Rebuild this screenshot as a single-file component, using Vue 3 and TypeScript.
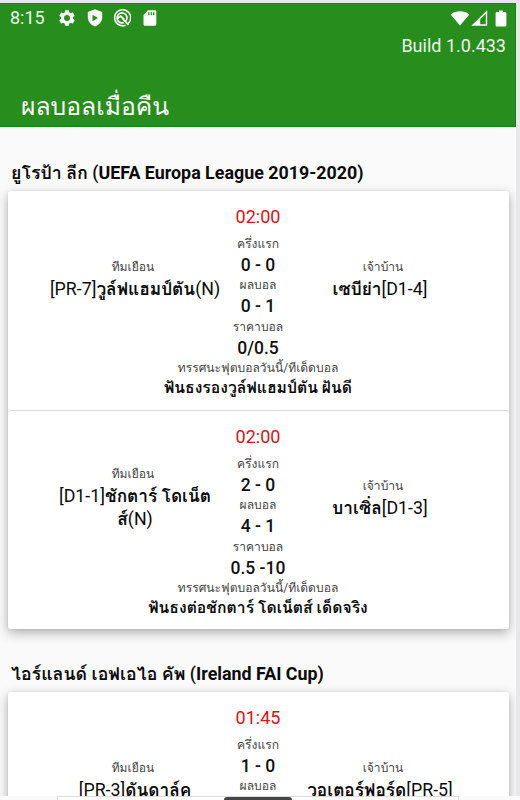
<script setup lang="ts">
interface Match {
  time: string
  away: string[]
  home: string
  half: string
  full: string
  odds: string
  tip: string
}
interface League {
  name: string
  latin: string
  matches: Match[]
}
interface Run {
  text: string
  thai: boolean
}

const leagues: League[] = [
  {
    name: 'ยูโรป้า ลีก',
    latin: 'UEFA Europa League 2019-2020)',
    matches: [
      { time: '02:00', away: ['[PR-7]วูล์ฟแฮมป์ตัน(N)'], home: 'เซบีย่า[D1-4]', half: '0 - 0', full: '0 - 1', odds: '0/0.5', tip: 'ฟันธงรองวูล์ฟแฮมป์ตัน ฝันดี' },
      { time: '02:00', away: ['[D1-1]ชักตาร์ โดเน็ต', 'ส์(N)'], home: 'บาเซิ่ล[D1-3]', half: '2 - 0', full: '4 - 1', odds: '0.5 -10', tip: 'ฟันธงต่อชักตาร์ โดเน็ตส์ เด็ดจริง' },
    ],
  },
  {
    name: 'ไอร์แลนด์ เอฟเอไอ คัพ',
    latin: 'Ireland FAI Cup)',
    matches: [
      { time: '01:45', away: ['[PR-3]ดันดาล์ค'], home: 'วอเตอร์ฟอร์ด[PR-5]', half: '1 - 0', full: '', odds: '', tip: '' },
    ],
  },
]

// Thai script is set heavier than the Latin rank tags around it.
function runs(text: string): Run[] {
  const parts = text.match(/[\u0e00-\u0e7f ]+|[^\u0e00-\u0e7f ]+/g) ?? []
  return parts.map((p) => ({ text: p, thai: /[\u0e00-\u0e7f]/.test(p) }))
}
</script>

<template>
  <div class="screen">
    <div class="device">
      <header class="appbar">
        <div class="status">
          <span class="clock">8:15</span>
          <svg class="ic gear" viewBox="1 1 22 22"><path d="M19.14 12.94c.04-.3.06-.61.06-.94s-.02-.64-.07-.94l2.03-1.58a.5.5 0 0 0 .12-.61l-1.92-3.32a.49.49 0 0 0-.59-.22l-2.39.96a7 7 0 0 0-1.62-.94L14.4 2.81a.48.48 0 0 0-.48-.41h-3.84a.47.47 0 0 0-.47.41l-.36 2.54c-.59.24-1.13.57-1.62.94l-2.39-.96a.48.48 0 0 0-.59.22L2.74 8.87a.48.48 0 0 0 .12.61l2.03 1.58c-.05.3-.09.63-.09.94s.02.64.07.94l-2.03 1.58a.5.5 0 0 0-.12.61l1.92 3.32c.12.22.37.29.59.22l2.39-.96c.5.38 1.03.7 1.62.94l.36 2.54c.05.24.24.41.48.41h3.84c.24 0 .44-.17.47-.41l.36-2.54a7 7 0 0 0 1.62-.94l2.39.96c.22.08.47 0 .59-.22l1.92-3.32a.48.48 0 0 0-.12-.61zM12 15.6a3.6 3.6 0 1 1 0-7.2 3.6 3.6 0 0 1 0 7.2z" /></svg>
          <svg class="ic shield" viewBox="0 0 16 18"><path fill-rule="evenodd" d="M8 .3 15.2 3v5.2c0 4.3-2.8 7.5-7.2 9.3C3.600 15.700.8 12.500.8 8.200V3zM5.500 5.800v6.400L11 9z" /></svg>
          <svg class="ic radar" viewBox="0 0 18 18"><g fill="none" stroke="#fff"><path stroke-width="1.600" d="M15.200 14.500A8 8 0 1 0 12.500 16.200" /><path stroke-width="1.700" d="M12.800 12.200a5 5 0 1 0-2 1.400M4.800 9.300l3-2.200 3.700 3.600M9 9l6.500 6.800" /></g></svg>
          <svg class="ic sd" viewBox="0 0 14 16"><path fill-rule="evenodd" d="M5 .3h6.800c.9 0 1.500.6 1.500 1.500v12.400c0 .9-.6 1.500-1.500 1.500H2c-.9 0-1.500-.6-1.500-1.500V4.900zM5.100 2.200v3h1.300v-3zM7.600 2.200v3h1.300v-3zM10.100 2.200v3h1.300v-3z" /></svg>
          <span class="grow"></span>
          <svg class="ic wifi" viewBox="0 0 20 16"><path d="M.6 4.500C6 .1 14 .1 19.400 4.500L10 15.600z" /></svg>
          <svg class="ic cell" viewBox="0 0 17 16"><path fill-rule="evenodd" d="M.3 15.800 16.200.3v15.500zM9.200 9v5.300h5.600V3.700z" /></svg>
          <svg class="ic batt" viewBox="0 0 12 17"><path d="M4 .5h4v1.600h2c.8 0 1.400.6 1.400 1.400v11.700c0 .8-.6 1.400-1.400 1.400H2c-.8 0-1.400-.6-1.400-1.400V3.500C.6 2.700 1.200 2.100 2 2.100h2z" /></svg>
        </div>
        <div class="build">Build 1.0.433</div>
        <h1 class="title">ผลบอลเมื่อคืน</h1>
      </header>

      <section v-for="league in leagues" :key="league.latin" class="league">
        <h2 class="league-name"><span class="thai">{{ league.name }}</span> (<b>{{ league.latin }}</b></h2>
        <div class="cards">
          <article v-for="m in league.matches" :key="m.home" class="card">
            <div class="time">{{ m.time }}</div>
            <div class="match">
              <div class="team away">
                <span class="label">ทีมเยือน</span>
                <strong v-for="line in m.away" :key="line" class="name"><span v-for="r in runs(line)" :key="r.text" :class="{ thai: r.thai }">{{ r.text }}</span></strong>
              </div>
              <div class="scores">
                <span class="label">ครึ่งแรก</span>
                <span class="score">{{ m.half }}</span>
                <span class="label">ผลบอล</span>
                <template v-if="m.full">
                  <span class="score">{{ m.full }}</span>
                  <span class="label">ราคาบอล</span>
                  <span class="score">{{ m.odds }}</span>
                </template>
              </div>
              <div class="team home">
                <span class="label">เจ้าบ้าน</span>
                <strong class="name"><span v-for="r in runs(m.home)" :key="r.text" :class="{ thai: r.thai }">{{ r.text }}</span></strong>
              </div>
            </div>
            <template v-if="m.tip">
              <div class="label tip-label">ทรรศนะฟุตบอลวันนี้/ทีเด็ดบอล</div>
              <div class="tip">{{ m.tip }}</div>
            </template>
          </article>
        </div>
      </section>
    </div>
    <footer class="bottom"><div class="sheet"><i class="tab"></i></div></footer>
  </div>
</template>

<style>
body { margin: 0; overflow: hidden; }
</style>

<style scoped>
.screen { width: 520px; height: 800px; overflow: hidden; background: #e8e8ea; font-family: Roboto, "Loma", sans-serif; box-sizing: border-box; padding-top: 3px; }
.device { width: 516px; height: 793px; overflow: hidden; background: #fafafa; }
.appbar { height: 124px; box-sizing: border-box; background: #278d1d; border: 1px solid #118411; border-left: 0; color: #fff; }
.status { display: flex; align-items: center; height: 28px; padding: 0 8px 0 10px; }
.clock { width: 48px; font-size: 18px; line-height: 28px; color: #edf7ec; }
.grow { flex: 1; }
.ic { display: block; fill: #fff; flex: none; }
.gear { width: 18px; height: 18px; margin-right: 11px; }
.shield { width: 16px; height: 18px; margin-right: 10px; }
.radar { width: 18px; height: 18px; margin-right: 12px; }
.sd { width: 14px; height: 16px; }
.wifi { width: 20px; height: 16px; }
.cell { width: 17px; height: 16px; margin: 0 7px 0 1px; }
.batt { width: 12px; height: 17px; }
.build { height: 28px; line-height: 28px; padding-right: 9px; text-align: right; font-size: 18px; color: #edf7ec; }
.title { margin: 0; padding: 27px 0 0 21px; font-size: 24.700px; line-height: 40px; height: 40px; font-weight: 400; white-space: nowrap; }
.league { padding-top: 30px; }
.league + .league { padding-top: 29px; }
.league-name { margin: 0; height: 34px; line-height: 32px; padding-left: 11px; font-size: 17.850px; font-weight: 500; color: #0b0b0b; white-space: nowrap; }
.league-name b { font-weight: 700; }
.league-name .thai { font-size: 17.800px; font-weight: 600; }
.cards { width: 501px; margin-left: 8px; border-radius: 3px; box-shadow: 0 4px 12px rgba(0,0,0,.3), 0 0 3px rgba(0,0,0,.1); }
.card { height: 219px; box-sizing: border-box; padding: 12px 1px 0 0; background: #fff; border-radius: 3px; text-align: center; white-space: nowrap; }
.card + .card { border-top: 1px solid #d8d8d8; }
.card + .card .team { padding-bottom: 38px; }
.time { height: 30.500px; line-height: 27px; font-size: 18px; color: #df1111; }
.match { display: grid; grid-template-columns: 177px 73px 177px; justify-content: center; height: 125px; }
.team { display: flex; flex-direction: column; align-items: center; justify-content: center; padding-bottom: 36px; }
.team .label { line-height: 20px; height: 20px; }
.name { font-size: 17.800px; line-height: 23px; height: 23px; font-weight: 400; color: #0b0b0b; white-space: pre; }
.name .thai { font-size: 17.300px; font-weight: 600; }
.away .name { padding-left: 4px; }
.home .name { padding-right: 6px; }
.scores { display: flex; flex-direction: column; align-items: center; }
.label { font-size: 12.100px; line-height: 21px; height: 21px; color: #454545; }
.score { font-size: 17.500px; line-height: 21px; height: 20.900px; font-weight: 500; color: #111; white-space: pre; }
.tip-label { height: 19px; line-height: 19px; }
.tip { font-size: 15.750px; line-height: 20px; font-weight: 600; color: #0b0b0b; }
.bottom { height: 4px; width: 520px; background: #fafafa; display: flex; }
.sheet { width: 400px; height: 4px; margin-left: 57px; border: 1px solid #dcdcdc; background: #fff; display: flex; justify-content: center; }
.tab { width: 68px; height: 8px; border-radius: 3px 3px 0 0; background: #454545; }
</style>
